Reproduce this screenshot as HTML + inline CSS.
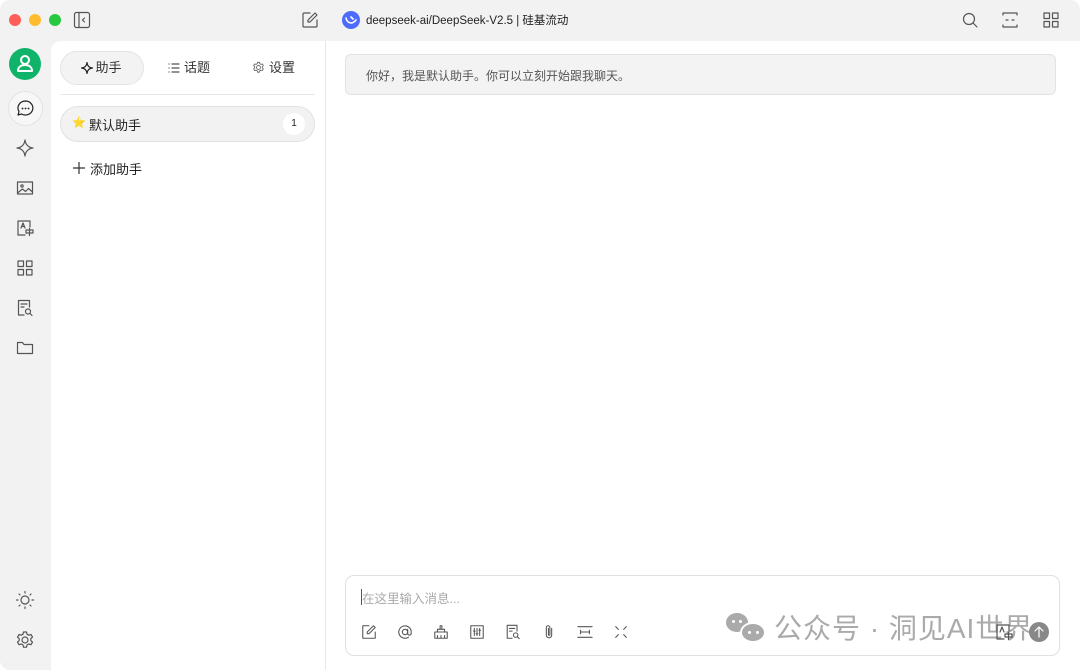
<!DOCTYPE html>
<html><head><meta charset="utf-8"><style>
*{box-sizing:border-box;margin:0;padding:0}
body{width:1080px;height:670px;overflow:hidden;background:#fff;font-family:"Liberation Sans","Noto Sans CJK SC",sans-serif;color:#222}
.win{position:absolute;left:0;top:0;width:1080px;height:670px;background:#f2f2f2;border-radius:10px;overflow:hidden}
.dot{position:absolute;top:14px;width:12px;height:12px;border-radius:50%}
svg{position:absolute;fill:none;stroke:#555;stroke-width:1.2;stroke-linecap:round;stroke-linejoin:round}
.side{position:absolute;left:51px;top:41px;width:275px;height:629px;background:#fff;border-top-left-radius:10px;border-right:1px solid #e8e8e8}
.main{position:absolute;left:326px;top:41px;width:754px;height:629px;background:#fff}
.tab{position:absolute;top:10px;height:34px;font-size:13px;line-height:34px;color:#333}
.t{position:absolute;white-space:nowrap}
</style></head><body><div class="win">
<div class="dot" style="left:9px;background:#fe5f57"></div>
<div class="dot" style="left:29px;background:#febc2e"></div>
<div class="dot" style="left:49px;background:#28c840"></div>
<svg style="left:73px;top:11px" width="18" height="18" viewBox="0 0 18 18"><rect x="1.5" y="1.5" width="15" height="15" rx="2"/><path d="M6 1.5v15M11.5 7l-2 2 2 2"/></svg>
<svg style="left:301px;top:11px" width="18" height="18" viewBox="0 0 18 18"><path d="M9 2H3a1 1 0 0 0-1 1v12a1 1 0 0 0 1 1h12a1 1 0 0 0 1-1V9"/><path d="M14 2l2 2-7 7H7V9z"/></svg>
<div style="position:absolute;left:342px;top:11px;width:18px;height:18px;border-radius:50%;background:#4d6bfe"></div>
<svg style="left:345px;top:14px;stroke:#fff;stroke-width:1.6" width="12" height="12" viewBox="0 0 12 12"><path d="M1 4c1 5 6 7 10 2M6 3l2 2"/></svg>
<div class="t" style="left:366px;top:12px;font-size:11.5px;color:#222">deepseek-ai/DeepSeek-V2.5 | 硅基流动</div>
<svg style="left:961px;top:11px" width="18" height="18" viewBox="0 0 18 18"><circle cx="8" cy="8" r="5.5"/><path d="M12 12l4 4"/></svg>
<svg style="left:1001px;top:11px" width="18" height="18" viewBox="0 0 18 18"><path d="M2 2h14M2 16h14M2 2v2M16 2v2M2 16v-2M16 16v-2M5 9h2M11 9h2"/></svg>
<svg style="left:1042px;top:11px" width="18" height="18" viewBox="0 0 18 18"><rect x="2" y="2" width="5.5" height="5.5"/><rect x="10.5" y="2" width="5.5" height="5.5"/><rect x="2" y="10.5" width="5.5" height="5.5"/><rect x="10.5" y="10.5" width="5.5" height="5.5"/></svg>
<div style="position:absolute;left:9px;top:48px;width:32px;height:32px;border-radius:50%;background:#0fb46a"></div>
<svg style="left:15px;top:53px;stroke:#fff;stroke-width:2" width="20" height="20" viewBox="0 0 20 20"><circle cx="10" cy="7" r="4"/><path d="M3 18c0-4 3-6 7-6s7 2 7 6z"/></svg>
<div style="position:absolute;left:8px;top:91px;width:35px;height:35px;border-radius:50%;background:#f7f7f7;border:1px solid #e2e2e2"></div>
<svg style="left:16px;top:99px;stroke:#222" width="19" height="19" viewBox="0 0 19 19"><path d="M9.5 2a7.5 7 0 1 1-4 13L2 16l1-3.5A7.5 7 0 0 1 9.5 2z"/><path d="M6.5 9.5h.1M9.5 9.5h.1M12.5 9.5h.1" stroke-width="1.8"/></svg>
<svg style="left:16px;top:139px" width="18" height="18" viewBox="0 0 18 18"><path d="M9 1c.5 4 3 7.5 8 8-5 .5-7.5 4-8 8-.5-4-3-7.5-8-8 5-.5 7.5-4 8-8z"/></svg>
<svg style="left:16px;top:179px" width="18" height="18" viewBox="0 0 18 18"><rect x="1.5" y="3" width="15" height="12"/><circle cx="6" cy="7" r="1.2"/><path d="M1.5 14l5-4 3 2.5 3-3 4 3.5"/></svg>
<svg style="left:16px;top:219px" width="18" height="18" viewBox="0 0 18 18"><path d="M9 16H2V2h12v6"/><path d="M5 9l2-5 2 5M5.6 7.5h2.8M10 11h7v3h-7zM13.5 9.5v7"/></svg>
<svg style="left:16px;top:259px" width="18" height="18" viewBox="0 0 18 18"><rect x="2" y="2" width="5.5" height="5.5"/><rect x="10.5" y="2" width="5.5" height="5.5"/><rect x="2" y="10.5" width="5.5" height="5.5"/><rect x="10.5" y="10.5" width="5.5" height="5.5"/></svg>
<svg style="left:16px;top:299px" width="18" height="18" viewBox="0 0 18 18"><path d="M8 16H2.5V1.5h11V8M5 5h6M5 8h3"/><circle cx="12" cy="12.5" r="2.5"/><path d="M14 14.5l2 2"/></svg>
<svg style="left:16px;top:339px" width="18" height="18" viewBox="0 0 18 18"><path d="M1.5 3.5h5l1.5 2h8.5v9h-15z"/></svg>
<svg style="left:15px;top:590px" width="20" height="20" viewBox="0 0 20 20"><circle cx="10" cy="10" r="4"/><path d="M10 1.5v1.5M10 17v1.5M1.5 10h1.5M17 10h1.5M4 4l1 1M15 15l1 1M4 16l1-1M15 5l1-1"/></svg>
<svg style="left:15px;top:630px" width="20" height="20" viewBox="0 0 20 20"><circle cx="10" cy="10" r="3"/><path d="M8.5 2h3l.5 2.2 1.8 1 2.2-.7 1.5 2.6-1.7 1.5v2l1.7 1.5-1.5 2.6-2.2-.7-1.8 1-.5 2.2h-3l-.5-2.2-1.8-1-2.2.7-1.5-2.6 1.7-1.5v-2L2.5 7.1 4 4.5l2.2.7 1.8-1z"/></svg>
<div class="side">
<div class="tab" style="left:9px;width:84px;background:#f3f3f3;border:1px solid #e4e4e4;border-radius:17px;line-height:32px;padding-left:20px">&nbsp;&nbsp;&nbsp;&nbsp;助手</div>
<svg style="left:30px;top:21px;stroke:#222" width="12" height="12" viewBox="0 0 12 12"><path d="M6 .5C6.3 4 8 5.7 11.5 6 8 6.3 6.3 8 6 11.5 5.7 8 4 6.3.5 6 4 5.7 5.7 4 6 .5z"/></svg>
<div class="tab" style="left:133px">话题</div>
<svg style="left:117px;top:21px" width="12" height="12" viewBox="0 0 12 12"><path d="M1 2h.1M1 6h.1M1 10h.1M4 2h7M4 6h7M4 10h7"/></svg>
<div class="tab" style="left:218px">设置</div>
<svg style="left:201px;top:20px" width="13" height="13" viewBox="0 0 20 20"><circle cx="10" cy="10" r="3"/><path d="M8.5 2h3l.5 2.2 1.8 1 2.2-.7 1.5 2.6-1.7 1.5v2l1.7 1.5-1.5 2.6-2.2-.7-1.8 1-.5 2.2h-3l-.5-2.2-1.8-1-2.2.7-1.5-2.6 1.7-1.5v-2L2.5 7.1 4 4.5l2.2.7 1.8-1z"/></svg>
<div style="position:absolute;left:9px;top:53px;width:255px;height:1px;background:#e8e8e8"></div>
<div style="position:absolute;left:9px;top:65px;width:255px;height:36px;background:#f2f2f2;border:1px solid #e2e2e2;border-radius:18px"></div>
<div class="t" style="left:21px;top:75px;font-size:11px">⭐</div>
<div class="t" style="left:38px;top:74px;font-size:13px;color:#222">默认助手</div>
<div style="position:absolute;left:232px;top:72px;width:22px;height:22px;border-radius:50%;background:#fff;font-size:10px;text-align:center;line-height:22px">1</div>
<div class="t" style="left:39px;top:118px;font-size:13px">添加助手</div>
<svg style="left:22px;top:121px;stroke:#333" width="12" height="12" viewBox="0 0 12 12"><path d="M6 0v12M0 6h12"/></svg>
</div>
<div class="main">
<div style="position:absolute;left:19px;top:13px;width:711px;height:41px;background:#f3f3f3;border:1px solid #e2e2e2;border-radius:6px"></div>
<div class="t" style="left:40px;top:26px;font-size:12px;color:#555">你好，我是默认助手。你可以立刻开始跟我聊天。</div>
<div style="position:absolute;left:19px;top:534px;width:715px;height:81px;border:1px solid #e0e0e0;border-radius:9px;background:#fff"></div>
<div style="position:absolute;left:35px;top:548px;width:1px;height:16px;background:#555"></div>
<div class="t" style="left:36px;top:547px;font-size:12.5px;color:#aaa">在这里输入消息...</div>
<svg style="left:35px;top:583px" width="16" height="16" viewBox="0 0 18 18"><path d="M9 2H2v14h14V9"/><path d="M14 2l2 2-7 7H7V9z"/></svg>
<svg style="left:71px;top:583px" width="16" height="16" viewBox="0 0 18 18"><circle cx="9" cy="9" r="3"/><path d="M12 6v4.5a2 2 0 0 0 4 0V9a7 7 0 1 0-3 5.8"/></svg>
<svg style="left:107px;top:583px" width="16" height="16" viewBox="0 0 18 18"><path d="M2 16h14V9H2zM5 9V6h8v3M8 6V2h2v4M5 16v-3M9 16v-3M13 16v-3"/></svg>
<svg style="left:143px;top:583px" width="16" height="16" viewBox="0 0 18 18"><rect x="2" y="2" width="14" height="14"/><path d="M6 5v8M9 5v8M12 5v8M5 8h2M8 11h2M11 7h2"/></svg>
<svg style="left:179px;top:583px" width="16" height="16" viewBox="0 0 18 18"><path d="M8 16H2.5V1.5h11V8M5 5h6M5 8h3"/><circle cx="12" cy="12.5" r="2.5"/><path d="M14 14.5l2 2"/></svg>
<svg style="left:215px;top:583px" width="16" height="16" viewBox="0 0 18 18"><path d="M12 5v7.5a3 3 0 0 1-6 0V4a2 2 0 0 1 4 0v8a.8.8 0 0 1-1.6 0V5"/></svg>
<svg style="left:251px;top:583px" width="16" height="16" viewBox="0 0 18 18"><path d="M1 3h16M1 15h16M4 9h10M4 7v4M14 7v4"/></svg>
<svg style="left:287px;top:583px" width="16" height="16" viewBox="0 0 18 18"><path d="M3 3l3 3M15 3l-3 3M3 15l3-3M15 15l-3-3"/></svg>
<div style="position:absolute;left:400px;top:572px;width:22px;height:19px;border-radius:50%;background:#aaa"></div>
<div style="position:absolute;left:406px;top:579px;width:3px;height:3px;border-radius:50%;background:#fff"></div>
<div style="position:absolute;left:413px;top:579px;width:3px;height:3px;border-radius:50%;background:#fff"></div>
<div style="position:absolute;left:414px;top:581px;width:26px;height:21px;border-radius:50%;background:#aaa;border:2px solid #fff"></div>
<div style="position:absolute;left:422px;top:590px;width:3px;height:3px;border-radius:50%;background:#fff"></div>
<div style="position:absolute;left:430px;top:590px;width:3px;height:3px;border-radius:50%;background:#fff"></div>
<div class="t" style="left:448px;top:566px;font-size:28px;color:#aaa;letter-spacing:1px">公众号 · 洞见AI世界</div>
<svg style="left:669px;top:582px;stroke:#555" width="18" height="18" viewBox="0 0 18 18"><path d="M9 16H2V2h12v6"/><path d="M5 9l2-5 2 5M10 11h7v3h-7zM13.5 9.5v7"/></svg>
<div style="position:absolute;left:703px;top:581px;width:20px;height:20px;border-radius:50%;background:#888"></div>
<svg style="left:707px;top:585px;stroke:#fff" width="12" height="12" viewBox="0 0 12 12"><path d="M6 11V1M2 5l4-4 4 4"/></svg>
</div>
</div></body></html>
